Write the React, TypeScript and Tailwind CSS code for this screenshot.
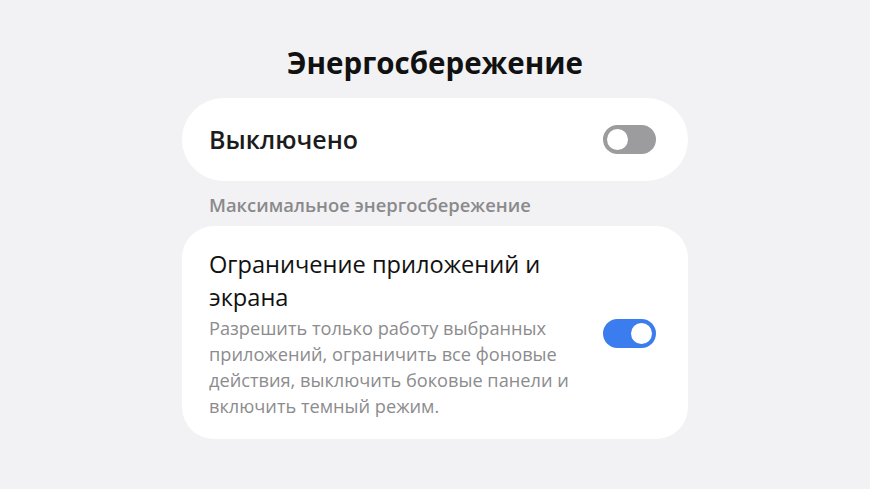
import React from "react";

function Toggle({ on }: { on: boolean }) {
  if (on) {
    return (
      <div className="flex h-[29px] w-[53px] shrink-0 items-center justify-end rounded-full bg-[#3b7cee] pr-[2px]">
        <div className="h-[25px] w-[25px] rounded-full border-[2px] border-[#3b7cee] bg-white" />
      </div>
    );
  }
  return (
    <div className="flex h-[29px] w-[53px] shrink-0 items-center rounded-full bg-[#9c9c9e] pl-[2px]">
      <div className="h-[25px] w-[25px] rounded-full border-[2px] border-[#9c9c9e] bg-white" />
    </div>
  );
}

export default function App() {
  return (
    <div
      className="flex h-[489px] w-[870px] flex-col items-center bg-[#f2f2f4] pt-[44px]"
      style={{ fontFamily: "'Open Sans', 'Noto Sans', sans-serif" }}
    >
      <h1 className="text-[29.5px] font-bold leading-[38px] text-[#111]">Энергосбережение</h1>

      <div className="mt-[16px] flex h-[83px] w-[506px] items-center justify-between rounded-[42px] bg-white pl-[27px] pr-[32px]">
        <span className="text-[25px] font-semibold text-[#1c1c1c]">Выключено</span>
        <Toggle on={false} />
      </div>

      <div className="mt-[13px] w-[506px] pl-[27px] text-[18.4px] font-semibold leading-[22px] text-[#8a8a8c]">
        Максимальное энергосбережение
      </div>

      <div className="mt-[10px] flex w-[506px] items-center justify-between rounded-[32px] bg-white pb-[20px] pl-[27px] pr-[32px] pt-[22px]">
        <div className="w-[372px]">
          <div className="text-[23.6px] leading-[33px] text-[#111]">Ограничение приложений и экрана</div>
          <div className="mt-[1px] text-[18.2px] leading-[26px] text-[#8c8c8e]">
            Разрешить только работу выбранных приложений, ограничить все фоновые действия, выключить боковые
            панели и включить темный режим.
          </div>
        </div>
        <Toggle on />
      </div>
    </div>
  );
}
